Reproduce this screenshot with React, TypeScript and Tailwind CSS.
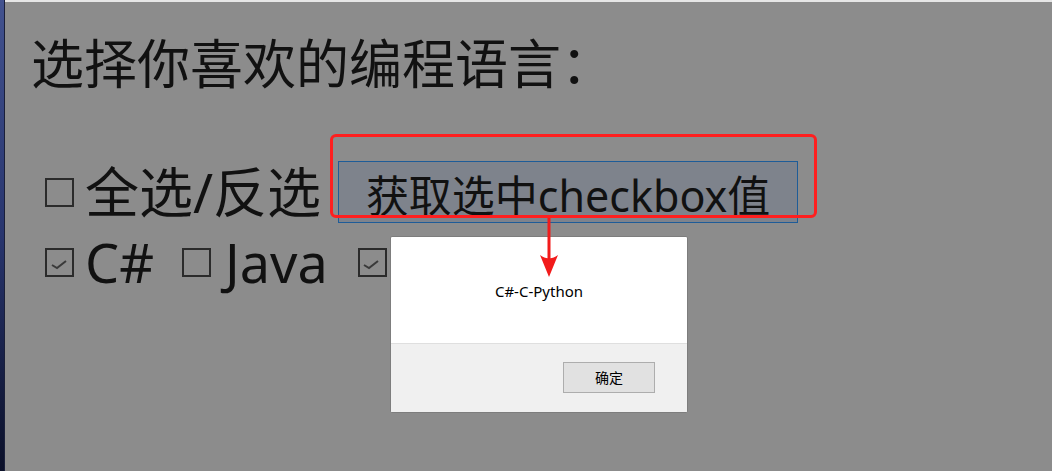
import React from 'react';

const font = "font-['Noto_Sans','Noto_Sans_CJK_SC',sans-serif]";

const Box = ({ checked }: { checked?: boolean }) => (
  <span className="w-[29px] h-[29px] border-[2px] border-[#2b2b2b] flex items-end justify-center shrink-0">
    {checked && (
      <svg width="22" height="16" viewBox="0 0 22 16" className="mb-[3px]">
        <path d="M3 9 L8 12 L17 5" fill="none" stroke="#3a3a3a" strokeWidth="2" />
      </svg>
    )}
  </span>
);

export default function App() {
  return (
    <div className={`w-[1052px] h-[471px] relative overflow-hidden flex ${font}`}>
      <div className="w-[5px] h-full bg-gradient-to-b from-[#42528f] via-[#28356e] to-[#0b1029] border-r border-[#1a1f3a]" />
      <div className="flex-1 flex flex-col bg-[#8c8c8c] text-[#111]">
        <div className="h-[2px] bg-[#e6e6e6]" />

        <h1 className="pl-[26px] mt-[31px] text-[53px] leading-[62px] font-normal">选择你喜欢的编程语言：</h1>

        <div className="flex items-center mt-[66px] pl-[40px] h-[62px]">
          <Box />
          <span className="ml-[11px] text-[54px] leading-none">全选/反选</span>
          <button className="ml-[17px] w-[460px] h-[62px] bg-[#7e838c] border border-[#1e5c98] text-[43px] leading-none flex items-center justify-center pt-[6px]">
            获取选中checkbox值
          </button>
        </div>

        <div className="flex items-center pl-[40px] mt-[19px] h-[40px]">
          <Box checked />
          <span className="ml-[11px] text-[54px] leading-none">C#</span>
          <span className="ml-[28px]"><Box /></span>
          <span className="ml-[14px] text-[54px] leading-none">Java</span>
          <span className="ml-[30px]"><Box checked /></span>
          <span className="ml-[10px] text-[54px] leading-none">Python</span>
        </div>
      </div>

      {/* annotation */}
      <div className="absolute left-[330px] top-[134px] w-[487px] h-[84px] border-[3px] border-[#ff1f1f] rounded-[6px]" />

      {/* alert dialog */}
      <div className="absolute left-[390px] top-[236px] w-[298px] h-[177px] border border-[#7d7d7d] rounded-[2px] bg-white flex flex-col overflow-hidden">
        <div className="h-[106px] flex justify-center pt-[45px] text-[15px] leading-[18px] text-black">C#-C-Python</div>
        <div className="flex-1 bg-[#f0f0f0] border-t border-[#dfdfdf] flex justify-end items-start pt-[18px] pr-[32px]">
          <button className="w-[92px] h-[31px] bg-[#e1e1e1] border border-[#adadad] text-[14px] text-black">确定</button>
        </div>
      </div>

      <svg className="absolute left-[538px] top-[218px]" width="22" height="60" viewBox="0 0 22 60">
        <rect x="9.5" y="0" width="3" height="42" fill="#f21b1b" />
        <path d="M2 37 Q8 41 11 40 Q14 41 20 37 L11 59 Z" fill="#f21b1b" />
      </svg>
    </div>
  );
}
